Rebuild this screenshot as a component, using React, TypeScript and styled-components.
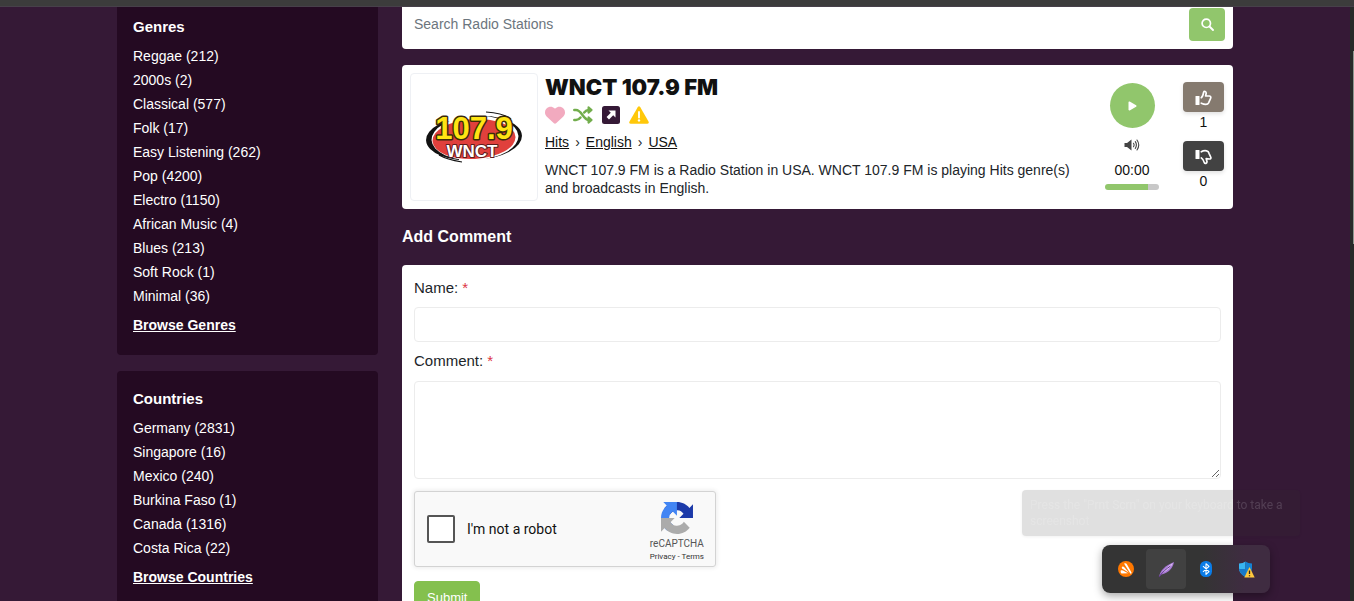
import React from "react";
import styled, { createGlobalStyle } from "styled-components";
import { FaHeart } from "react-icons/fa6";

const GlobalStyle = createGlobalStyle`
  *, *::before, *::after { box-sizing: border-box; }
  body {
    margin: 0;
    background: #351936;
    color: #212529;
    font-family: "Liberation Sans", Arial, sans-serif;
    font-size: 14px;
  }
  button, input, textarea { font: inherit; }
  h1, h2, p, ul { margin: 0; padding: 0; }
  svg { display: block; }
`;

const Page = styled.div`
  display: flex;
  flex-direction: column;
  height: 100vh;
  overflow: hidden;
`;

const BrowserEdge = styled.div`
  flex: none;
  height: 7px;
  background: #3c3c3c;
  border-bottom: 1px solid #47404a;
`;

const Body = styled.div`
  display: flex;
  flex: 1;
  min-height: 0;
`;

const Scrollable = styled.div`
  flex: 1;
  min-width: 0;
  overflow: hidden;
`;

const ScrollTrack = styled.div`
  flex: none;
  width: 4px;
  padding: 44px 0 0 3px;
  background: #272b29;
`;

const ScrollThumb = styled.div`
  height: 193px;
  background: #8b988e;
`;

const Container = styled.div`
  display: grid;
  grid-template-columns: minmax(0, 1fr) minmax(0, 3fr);
  max-width: 1140px;
  margin: 0 auto;
`;

const Column = styled.div`
  padding: 0 12px;
`;

const SideBox = styled.section<{ $first?: boolean }>`
  margin-bottom: 16px;
  padding: ${(p) => (p.$first ? "8px 16px 18px" : "16px 16px 18px")};
  border-radius: ${(p) => (p.$first ? "0 0 4px 4px" : "4px")};
  background: #240a22;
  color: #fff;
`;

const SideTitle = styled.h2`
  margin-bottom: 5px;
  font-size: 15px;
  line-height: 24px;
`;

const SideList = styled.ul`
  margin-bottom: 5px;
  list-style: none;
  line-height: 24px;
`;

const SideLink = styled.a`
  color: #fff;
  text-decoration: none;
`;

const BrowseLink = styled.a`
  display: inline-block;
  color: #fff;
  font-weight: bold;
  line-height: 24px;
`;

const SearchBar = styled.form`
  display: flex;
  margin-bottom: 16px;
  padding: 1px 8px 8px 12px;
  border-radius: 0 0 4px 4px;
  background: #fff;
`;

const SearchInput = styled.input`
  flex: 1;
  min-width: 0;
  padding: 0 0 2px;
  border: 0;
  outline: 0;
  background: transparent;
  &::placeholder { color: #6c757d; opacity: 1; }
`;

const SearchButton = styled.button`
  display: grid;
  place-items: center;
  width: 36px;
  height: 33px;
  padding: 0;
  border: 0;
  border-radius: 4px;
  background: #91c66c;
  color: #fff;
`;

const StationCard = styled.section`
  display: flex;
  gap: 7px;
  padding: 8px;
  border-radius: 4px;
  background: #fff;
`;

const LogoFrame = styled.div`
  display: grid;
  flex: none;
  place-items: center;
  width: 128px;
  height: 128px;
  border: 1px solid #eef0f4;
  border-radius: 4px;
`;

const StationInfo = styled.div`
  flex: 1;
  min-width: 0;
  padding-right: 16px;
`;

const StationName = styled.h1`
  margin-bottom: 4px;
  color: #111;
  font-family: "Arial Black", Inter, "Liberation Sans", sans-serif;
  font-size: 22px;
  font-weight: 900;
  line-height: 28px;
`;

const ActionRow = styled.div`
  display: flex;
  align-items: center;
  gap: 8px;
  height: 20px;
  margin-bottom: 8px;
`;

const IconButton = styled.button<{ $color: string }>`
  display: grid;
  place-items: center;
  width: 20px;
  height: 20px;
  padding: 0;
  border: 0;
  background: none;
  color: ${(p) => p.$color};
`;

const Trail = styled.nav`
  display: flex;
  gap: 6px;
  margin-bottom: 10px;
  line-height: 18px;
  a { color: #111; }
`;

const Description = styled.p`
  line-height: 18px;
`;

const Player = styled.div`
  display: flex;
  flex: none;
  flex-direction: column;
  align-items: center;
  width: 54px;
  margin: 10px 17px 0 0;
`;

const PlayButton = styled.button`
  display: grid;
  place-items: center;
  width: 45px;
  height: 45px;
  margin-bottom: 11px;
  padding: 0;
  border: 0;
  border-radius: 50%;
  background: #91c66c;
  color: #fff;
`;

const Time = styled.span`
  margin: 10px 0 5px;
  color: #111;
  line-height: 18px;
`;

const VolumeBar = styled.div`
  width: 100%;
  height: 6px;
  border-radius: 3px;
  background: linear-gradient(to right, #91c66c 80%, #c8c8c8 80%);
`;

const Votes = styled.div`
  display: flex;
  flex: none;
  flex-direction: column;
  align-items: center;
  margin: 9px 1px 0 0;
  color: #111;
  line-height: 20px;
`;

const VoteButton = styled.button<{ $bg: string }>`
  display: grid;
  place-items: center;
  width: 41px;
  height: 30px;
  padding: 2px 0 0;
  border: 0;
  border-radius: 4px;
  background: ${(p) => p.$bg};
  box-shadow: 0 2px 4px rgba(0, 0, 0, 0.12);
  color: #fff;
`;

const VoteCount = styled.span`
  margin-bottom: 9px;
`;

const SectionTitle = styled.h2`
  margin: 16px 0;
  color: #fff;
  font-size: 16px;
  line-height: 24px;
`;

const CommentForm = styled.form`
  padding: 12px;
  border-radius: 4px;
  background: #fff;
`;

const Label = styled.label`
  display: block;
  margin-bottom: 8px;
  font-size: 15px;
  line-height: 22px;
`;

const Required = styled.span`
  color: #dc3545;
`;

const NameInput = styled.input`
  display: block;
  width: 100%;
  height: 35px;
  margin-bottom: 8px;
  padding: 6px 12px;
  border: 1px solid #ececec;
  border-radius: 4px;
`;

const CommentInput = styled.textarea`
  display: block;
  width: 100%;
  height: 98px;
  margin: 9px 0 12px;
  padding: 6px 12px;
  border: 1px solid #ececec;
  border-radius: 4px;
  resize: vertical;
`;

const Captcha = styled.div`
  display: flex;
  align-items: center;
  width: 302px;
  height: 76px;
  margin-bottom: 14px;
  padding: 0 11px 0 12px;
  border: 1px solid #d3d3d3;
  border-radius: 3px;
  background: #f9f9f9;
  box-shadow: 0 0 4px 1px rgba(0, 0, 0, 0.08);
  font-family: Roboto, sans-serif;
`;

const CaptchaCheck = styled.input`
  width: 28px;
  height: 28px;
  margin: 0 12px 0 0;
  appearance: none;
  border: 2px solid #555;
  border-radius: 2px;
  background: #fff;
`;

const CaptchaLabel = styled.label`
  flex: 1;
  color: #111;
`;

const CaptchaBrand = styled.div`
  display: flex;
  flex-direction: column;
  align-items: center;
  padding-top: 7px;
  color: #555;
  font-size: 10px;
  line-height: 12px;
`;

const BrandName = styled.span`
  margin-top: 4px;
`;

const CaptchaTerms = styled.span`
  font-size: 8px;
  line-height: 14px;
  color: #333;
  a { color: #333; text-decoration: none; }
`;

const SubmitButton = styled.button`
  height: 33px;
  padding: 0 12px;
  border: 1px solid #84c04e;
  border-radius: 4px;
  background: #84c04e;
  color: #fff;
  font-size: 13px;
`;

const Hint = styled.div`
  position: fixed;
  right: 54px;
  bottom: 65px;
  width: 278px;
  padding: 7px 8px;
  border-radius: 4px;
  background: rgba(48, 48, 48, 0.15);
  box-shadow: 0 1px 3px rgba(0, 0, 0, 0.06);
  color: rgba(255, 255, 255, 0.15);
  font-family: Roboto, sans-serif;
  font-size: 12px;
  line-height: 16px;
`;

const Tray = styled.div`
  position: fixed;
  right: 84px;
  bottom: 8px;
  display: flex;
  padding: 4px;
  border-radius: 8px;
  background: linear-gradient(to right, #343434 60%, #3f2c41 85%);
  box-shadow: 0 3px 8px rgba(0, 0, 0, 0.35);
`;

const TrayButton = styled.button<{ $active?: boolean }>`
  display: grid;
  place-items: center;
  width: 40px;
  height: 40px;
  padding: 0;
  border: 0;
  border-radius: 4px;
  background: ${(p) => (p.$active ? "#414141" : "transparent")};
`;

const genres = [
  "Reggae (212)", "2000s (2)", "Classical (577)", "Folk (17)", "Easy Listening (262)", "Pop (4200)",
  "Electro (1150)", "African Music (4)", "Blues (213)", "Soft Rock (1)", "Minimal (36)",
];

const countries = [
  "Germany (2831)", "Singapore (16)", "Mexico (240)", "Burkina Faso (1)", "Canada (1316)", "Costa Rica (22)",
];

type SideProps = { title: string; items: string[]; more: string; first?: boolean };

function SideSection({ title, items, more, first }: SideProps) {
  return (
    <SideBox $first={first}>
      <SideTitle>{title}</SideTitle>
      <SideList>
        {items.map((item) => (
          <li key={item}><SideLink href="#">{item}</SideLink></li>
        ))}
      </SideList>
      <BrowseLink href="#">{more}</BrowseLink>
    </SideBox>
  );
}

function SearchIcon() {
  return (
    <svg width="13" height="13" viewBox="0 0 13 13" fill="none" stroke="currentColor" strokeLinecap="round">
      <circle cx="5.3" cy="5.3" r="4.2" strokeWidth="1.7" />
      <path d="M8.5 8.5 12 12" strokeWidth="1.9" />
    </svg>
  );
}

function StationLogo() {
  return (
    <svg width="98" height="54" viewBox="0 0 98 54">
      <ellipse cx="49" cy="28" rx="48" ry="22.5" fill="#111" transform="rotate(-3 49 28)" />
      <path d="M12 8C26 2 44 0 66 1L66 6 20 12Z" fill="#fff" />
      <path d="M34 48C60 51 76 48 88 41L92 48 60 54 34 54Z" fill="#fff" />
      <ellipse cx="50" cy="28" rx="43.500" ry="22" fill="#fff" transform="rotate(-3 50 28)" />
      <ellipse cx="49" cy="29" rx="41.500" ry="20" fill="#e0403c" transform="rotate(-3 49 29)" />
      <path d="M61 2C72 2.500 80 4.500 86 9M37 52C28 50.500 20 48.500 14 45" fill="none" stroke="#111" strokeWidth="1.200" />
      <g fontFamily="'Liberation Sans', sans-serif" fontWeight="700" textAnchor="middle" strokeLinejoin="round" paintOrder="stroke">
        <text x="49" y="29" fontSize="31" fill="#ffe413" stroke="#3b2a08" strokeWidth="3">107.9</text>
        <text x="47" y="47" fontSize="17" fill="#fff" stroke="#5d1b1b" strokeWidth="2">WNCT</text>
      </g>
    </svg>
  );
}

function ShuffleIcon() {
  return (
    <svg width="20" height="18" viewBox="0 0 20 18" fill="none" stroke="currentColor" strokeWidth="2.500" strokeLinecap="round" strokeLinejoin="round">
      <path d="M1.300 4H3C9 4 10 14 16 14H18M1.300 14H3C5 14 6.500 13 7.500 11.600M11.200 6.400C12.300 5 13.800 4 16 4H18" />
      <path d="M15.500 1.300 18.500 4 15.500 6.700ZM15.500 11.300 18.500 14 15.500 16.700Z" fill="currentColor" strokeWidth="2" />
    </svg>
  );
}

function OpenIcon() {
  return (
    <svg width="18" height="18" viewBox="0 0 18 18">
      <rect width="18" height="18" rx="2.500" fill="currentColor" />
      <path d="M6.500 4.500H13.500V11.500L11.200 9.200 7 13.400 4.600 11 8.800 6.800Z" fill="#fff" />
    </svg>
  );
}

function WarningIcon() {
  return (
    <svg width="20" height="18" viewBox="0 0 20 18">
      <path d="M8.700 1.200Q10-.8 11.300 1.200L19.500 15.500Q20.300 17.700 18.200 17.800H1.800Q-.3 17.700.5 15.500Z" fill="currentColor" />
      <path d="M10 6V11.500" stroke="#fff" strokeWidth="1.900" strokeLinecap="round" />
      <circle cx="10" cy="14.400" r="1.200" fill="#fff" />
    </svg>
  );
}

function SpeakerIcon() {
  return (
    <svg width="16" height="12" viewBox="0 0 16 12" fill="none" stroke="#444" strokeLinecap="round">
      <path d="M.5 4H3L7.500.5V11.500L3 8H.5Z" fill="#444" stroke="none" />
      <path d="M9.500 4.300Q10.700 6 9.500 7.700M11.300 2.600Q13.500 6 11.300 9.400M13 1Q16.500 6 13 11" strokeWidth="1.100" />
    </svg>
  );
}

function LikeIcon() {
  return (
    <svg width="17" height="16" viewBox="0 0 17 16">
      <rect x=".5" y="6" width="4" height="9" rx=".5" fill="currentColor" />
      <path
        d="M6.300 7.700C7.800 6.600 8.200 4.500 8.600 2.300 9.200.8 11.300 1.300 11.200 3.200L10.600 6H14.500C15.900 6.200 16.100 7.300 15.500 8.600L13.600 12.800C13 14 12 14.400 10.600 14.300 9 14.300 7.700 13.800 6.300 13.200"
        fill="none" stroke="currentColor" strokeWidth="1.700" strokeLinecap="round" strokeLinejoin="round"
      />
    </svg>
  );
}

function DislikeIcon() {
  return (
    <svg width="17" height="16" viewBox="0 0 17 16">
      <rect x=".5" y="1" width="4" height="9" rx=".5" fill="currentColor" />
      <path
        d="M6.300 2.800C8 1.800 9.800 1.500 11.600 1.900 13 2.200 13.700 3 14 4.300L15.900 8.500C16.100 9.500 15.500 10.100 14.500 10L11.200 9.600 12 12.700C12 14.500 10 15.100 9.300 13.600 8.800 11.700 8 10 6.300 8.900"
        fill="none" stroke="currentColor" strokeWidth="1.700" strokeLinecap="round" strokeLinejoin="round"
      />
    </svg>
  );
}

function CaptchaLogo() {
  return (
    <svg width="32" height="32" viewBox="0 0 64 64">
      <path fill="#1c3aa9" d="M64 31.955l-.033-1.370V4.687l-7.160 7.160C50.948 4.674 42.033.093 32.050.093c-10.400 0-19.622 4.960-25.458 12.640l11.736 11.860a15.550 15.550 0 0 1 4.754-5.334c2.050-1.600 4.952-2.906 8.968-2.906.485 0 .86.057 1.135.163 4.976.393 9.288 3.140 11.828 7.124l-8.307 8.307L64 31.953" />
      <path fill="#4285f4" d="M31.862.094l-1.370.033H4.594l7.160 7.160C4.580 13.147 0 22.060 0 32.046c0 10.400 4.960 19.622 12.640 25.458L24.500 45.768a15.550 15.550 0 0 1-5.334-4.754c-1.600-2.050-2.906-4.952-2.906-8.968 0-.485.057-.86.163-1.135.393-4.976 3.140-9.288 7.124-11.828l8.307 8.307L31.860.095" />
      <path fill="#ababab" d="M.001 32.045l.033 1.370v25.898l7.160-7.160c5.860 7.173 14.774 11.754 24.760 11.754 10.400 0 19.622-4.960 25.458-12.640l-11.736-11.860a15.550 15.550 0 0 1-4.754 5.334c-2.050 1.600-4.952 2.906-8.968 2.906-.485 0-.86-.057-1.135-.163-4.976-.393-9.288-3.140-11.828-7.124l8.307-8.307c-10.522.04-22.400.066-27.295-.005" />
    </svg>
  );
}

function AntivirusIcon() {
  return (
    <svg width="16" height="16" viewBox="0 0 16 16">
      <circle cx="8" cy="8" r="8" fill="#ff7800" />
      <path d="M6 2.500Q8 1.500 9 3.500L13.500 11.500Q13.800 13 12.300 12.500ZM3.800 6Q5 5 6.500 6.500L11 11.800 4 7.500ZM2.700 9.500Q3.500 8.800 5 9.500L10 12.300 3.500 12.500Q2.200 11.500 2.700 9.500Z" fill="#fff" />
    </svg>
  );
}

function FeatherIcon() {
  return (
    <svg width="17" height="17" viewBox="0 0 17 17">
      <path d="M1 16C2 9.500 7 4.500 16 1 15 7 10.500 12 3.500 13.500Z" fill="#a878d6" />
      <path d="M3.500 12.500C6 8.500 10 5 15 2 13 6.500 9 10 3.500 12.500Z" fill="#dcc2f5" />
      <path d="M1 16C4 11.500 8 8 12.500 5" fill="none" stroke="#5c3585" strokeWidth="1" />
    </svg>
  );
}

function BluetoothIcon() {
  return (
    <svg width="12" height="16" viewBox="0 0 12 16">
      <rect width="12" height="16" rx="5.500" fill="#0a7ce8" />
      <path d="M3 5.200 9 10.600 6 13.300V2.700L9 5.400 3 10.800" fill="none" stroke="#fff" strokeWidth="1.100" strokeLinejoin="round" />
    </svg>
  );
}

function SecurityIcon() {
  return (
    <svg width="17" height="17" viewBox="0 0 17 17">
      <path d="M1 2.500Q5 2.500 7.500.5V16Q1 12.500 1 7Z" fill="#39b5f0" />
      <path d="M7.500.5Q10 2.500 14 2.500V7Q14 12.500 7.500 16Z" fill="#1583d3" />
      <path d="M1 8H7.500V16Q2 13 1 8Z" fill="#1779cb" />
      <path d="M11.500 6 16.700 16.500H6.300Z" fill="#ffc83d" />
      <path d="M11.500 9.500V13M11.500 14.200V15.300" stroke="#222" strokeWidth="1.300" />
    </svg>
  );
}

export default function App() {
  return (
    <Page>
      <GlobalStyle />
      <BrowserEdge />
      <Body>
        <Scrollable>
          <Container>
            <Column as="aside">
              <SideSection title="Genres" items={genres} more="Browse Genres" first />
              <SideSection title="Countries" items={countries} more="Browse Countries" />
            </Column>
            <Column as="main">
              <SearchBar>
                <SearchInput type="search" aria-label="Search Radio Stations" placeholder="Search Radio Stations" />
                <SearchButton type="button" aria-label="Search"><SearchIcon /></SearchButton>
              </SearchBar>

              <StationCard>
                <LogoFrame><StationLogo /></LogoFrame>
                <StationInfo>
                  <StationName>WNCT 107.9 FM</StationName>
                  <ActionRow>
                    <IconButton $color="#f2aabf" aria-label="Favourite"><FaHeart size={20} /></IconButton>
                    <IconButton $color="#72ad4c" aria-label="Random station"><ShuffleIcon /></IconButton>
                    <IconButton $color="#351936" aria-label="Open in new window"><OpenIcon /></IconButton>
                    <IconButton $color="#ffc80a" aria-label="Report a problem"><WarningIcon /></IconButton>
                  </ActionRow>
                  <Trail>
                    <a href="#">Hits</a><span>›</span><a href="#">English</a><span>›</span><a href="#">USA</a>
                  </Trail>
                  <Description>
                    WNCT 107.9 FM is a Radio Station in USA. WNCT 107.9 FM is playing Hits genre(s) and broadcasts in English.
                  </Description>
                </StationInfo>
                <Player>
                  <PlayButton aria-label="Play">
                    <svg width="9" height="10" viewBox="0 0 9 10">
                      <path d="M1.300 1.300 7.700 5 1.300 8.700Z" fill="currentColor" stroke="currentColor" strokeWidth="1.600" strokeLinejoin="round" />
                    </svg>
                  </PlayButton>
                  <SpeakerIcon />
                  <Time>00:00</Time>
                  <VolumeBar />
                </Player>
                <Votes>
                  <VoteButton $bg="#857a6f" aria-label="Like"><LikeIcon /></VoteButton>
                  <VoteCount>1</VoteCount>
                  <VoteButton $bg="#424242" aria-label="Dislike"><DislikeIcon /></VoteButton>
                  <span>0</span>
                </Votes>
              </StationCard>

              <SectionTitle>Add Comment</SectionTitle>
              <CommentForm>
                <Label htmlFor="name">Name: <Required>*</Required></Label>
                <NameInput id="name" type="text" />
                <Label htmlFor="comment">Comment: <Required>*</Required></Label>
                <CommentInput id="comment" />
                <Captcha>
                  <CaptchaCheck id="robot" type="checkbox" />
                  <CaptchaLabel htmlFor="robot">I'm not a robot</CaptchaLabel>
                  <CaptchaBrand>
                    <CaptchaLogo />
                    <BrandName>reCAPTCHA</BrandName>
                    <CaptchaTerms><a href="#">Privacy</a> - <a href="#">Terms</a></CaptchaTerms>
                  </CaptchaBrand>
                </Captcha>
                <SubmitButton type="button">Submit</SubmitButton>
              </CommentForm>
            </Column>
          </Container>
        </Scrollable>
        <ScrollTrack><ScrollThumb /></ScrollTrack>
      </Body>

      <Hint>Press the "Prnt Scrn" on your keyboard to take a screenshot</Hint>
      <Tray>
        <TrayButton aria-label="Antivirus"><AntivirusIcon /></TrayButton>
        <TrayButton $active aria-label="Lightshot"><FeatherIcon /></TrayButton>
        <TrayButton aria-label="Bluetooth"><BluetoothIcon /></TrayButton>
        <TrayButton aria-label="Security"><SecurityIcon /></TrayButton>
      </Tray>
    </Page>
  );
}
